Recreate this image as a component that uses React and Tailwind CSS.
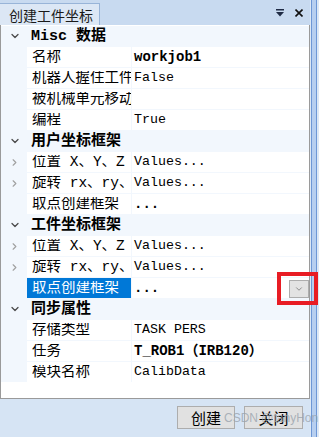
import { ChevronDown, ChevronRight } from 'lucide-react';

const sections = [
  {
    title: 'Misc 数据',
    rows: [
      { name: '名称', value: 'workjob1', bold: true },
      { name: '机器人握住工件', value: 'False' },
      { name: '被机械单元移动', value: '' },
      { name: '编程', value: 'True' },
    ],
  },
  {
    title: '用户坐标框架',
    rows: [
      { name: '位置 X、Y、Z', value: 'Values...', expand: true },
      { name: '旋转 rx、ry、rz', value: 'Values...', expand: true },
      { name: '取点创建框架', value: '...', bold: true },
    ],
  },
  {
    title: '工件坐标框架',
    rows: [
      { name: '位置 X、Y、Z', value: 'Values...', expand: true },
      { name: '旋转 rx、ry、rz', value: 'Values...', expand: true },
      { name: '取点创建框架', value: '...', bold: true, selected: true },
    ],
  },
  {
    title: '同步属性',
    rows: [
      { name: '存储类型', value: 'TASK PERS' },
      { name: '任务', value: 'T_ROB1（IRB120）', bold: true },
      { name: '模块名称', value: 'CalibData' },
    ],
  },
];

const font = "font-['Liberation_Mono','Noto_Sans_CJK_SC',monospace]";

function HeaderRow({ title }) {
  return (
    <div className="flex h-[20px] items-center mb-px">
      <div className="w-[25px] flex items-center justify-center pl-[2px]">
        <ChevronDown className="w-[12px] h-[12px] text-[#4a4a4a]" strokeWidth={2.5} />
      </div>
      <span className={`${font} pl-[5px] text-[15px] font-bold text-black leading-none whitespace-nowrap`}>
        {title}
      </span>
    </div>
  );
}

function PropRow({ row }) {
  return (
    <div className="flex h-[20px] mb-px gap-px">
      <div className="w-[25px] flex items-center justify-center pl-[2px]">
        {row.expand && <ChevronRight className="w-[11px] h-[11px] text-[#a0a0a0]" strokeWidth={2.5} />}
      </div>
      <div
        className={`w-[104px] shrink-0 flex items-center pl-[5px] ${
          row.selected ? 'bg-[#0078d7] text-white' : 'bg-white text-black'
        }`}
      >
        <span className={`block w-[99px] overflow-hidden whitespace-nowrap ${font} text-[14.5px] leading-none`}>
          {row.name}
        </span>
      </div>
      <div className="flex-1 bg-white flex items-center pl-[2px] relative">
        <span
          className={`${font} leading-none whitespace-nowrap text-black ${
            row.bold ? 'font-bold text-[14px]' : 'text-[13.3px]'
          }`}
        >
          {row.value}
        </span>
        {row.selected && (
          <div className="absolute right-0 top-[2px] w-[20px] h-[18px] bg-[#e3e3e3] border border-[#adadad] flex items-center justify-center">
            <ChevronDown className="w-[10px] h-[10px] text-[#555]" strokeWidth={1.5} />
          </div>
        )}
      </div>
    </div>
  );
}

export default function App() {
  return (
    <div className="relative w-[319px] h-[437px] bg-[#d6e4f4] flex overflow-hidden">
      <div className="w-[310px] flex flex-col">
        {/* title bar */}
        <div className="h-[25px] bg-[#c8daf0] flex items-end relative">
          <div className="h-[22px] w-[100px] bg-[#dce7f5] border-t border-r border-[#98b4d8] flex items-center pl-[9px]">
            <span className="font-['Noto_Sans_CJK_SC',sans-serif] text-[14px] text-[#1a1a1a] leading-none">
              创建工件坐标
            </span>
          </div>
          <div className="ml-auto self-center flex items-center gap-[11px] pr-[7px]">
            <svg width="8" height="8" viewBox="0 0 8 8">
              <rect x="0" y="0" width="8" height="1.5" fill="#1f2b45" />
              <path d="M0 3 L8 3 L4 7.5 Z" fill="#1f2b45" />
            </svg>
            <svg width="8" height="8" viewBox="0 0 8 8">
              <path d="M0.5 0.5 L7.5 7.5 M7.5 0.5 L0.5 7.5" stroke="#111" strokeWidth="1.6" />
            </svg>
          </div>
        </div>

        {/* property grid */}
        <div className="h-[374px] bg-white border-l border-r border-b border-[#9a9a9a] pt-px">
          <div className="bg-[#f2f7fd]">
            {sections.map((s) => (
              <div key={s.title}>
                <HeaderRow title={s.title} />
                {s.rows.map((r, i) => (
                  <PropRow key={i} row={r} />
                ))}
              </div>
            ))}
          </div>
        </div>

        {/* buttons */}
        <div className="flex-1 flex justify-end items-start gap-[9px] pt-[7px] pr-[7px]">
          <button className="w-[58px] h-[23px] bg-[#e1e1e1] border border-[#adadad] font-['Noto_Sans_CJK_SC',sans-serif] text-[15px] leading-none text-black">
            创建
          </button>
          <button className="w-[59px] h-[23px] bg-[#e1e1e1] border border-[#adadad] font-['Noto_Sans_CJK_SC',sans-serif] text-[15px] leading-none text-black">
            关闭
          </button>
        </div>
      </div>

      {/* splitter strip */}
      <div className="w-[9px] flex">
        <div className="w-px bg-[#dce8f6]" />
        <div className="w-px bg-[#6d97d6]" />
        <div className="w-[4px] bg-[#b7cff0]" />
        <div className="w-px bg-[#6d97d6]" />
        <div className="flex-1 bg-[#dce8f6]" />
      </div>

      {/* watermark */}
      <div className="absolute left-[224px] top-[412px] whitespace-nowrap font-['Liberation_Sans',sans-serif] text-[12px] text-[#9aa3ad]/80 leading-none pointer-events-none">
        CSDN @tanyHon
      </div>

      {/* red highlight box */}
      <div className="absolute left-[277px] top-[272px] w-[41px] h-[33px] border-[4px] border-[#e81c24] pointer-events-none" />
    </div>
  );
}
